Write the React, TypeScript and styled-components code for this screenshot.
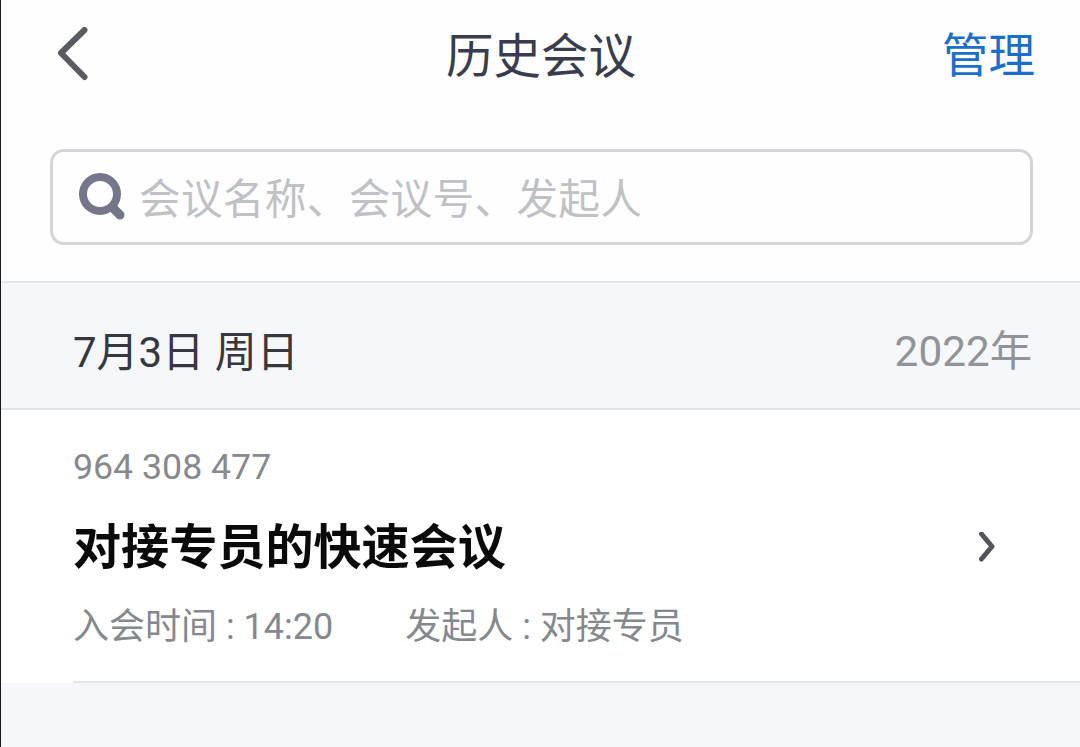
import React from "react";
import styled, { createGlobalStyle } from "styled-components";

const GlobalStyle = createGlobalStyle`
  html, body {
    margin: 0;
    padding: 0;
    height: 100%;
    background: #f5f7fa;
  }
  #root {
    height: 100%;
  }
`;

const Page = styled.div`
  width: 1080px;
  height: 747px;
  box-sizing: border-box;
  overflow: hidden;
  display: flex;
  flex-direction: column;
  background: #f5f7fa;
  border-left: 1px solid #1a1a1a;
  font-family: "Roboto", "Noto Sans CJK SC", sans-serif;
`;

const Top = styled.div`
  background: #fefefe;
  height: 283px;
  flex: none;
  box-sizing: border-box;
  border-bottom: 2px solid #e6e7ea;
`;

const NavBar = styled.header`
  height: 110px;
  display: grid;
  grid-template-columns: 1fr auto 1fr;
  align-items: center;
  padding: 0 45px 0 46px;
`;

const BackButton = styled.div`
  width: 36px;
  height: 56px;
  margin-left: 9px;
  display: flex;
`;

const NavTitle = styled.h1`
  margin: 5px 0 0;
  font-size: 47.5px;
  font-weight: 400;
  color: #393c4d;
  line-height: 1;
`;

const NavAction = styled.span`
  justify-self: end;
  margin-top: 2px;
  font-size: 46.5px;
  color: #1c6fc9;
  line-height: 1;
`;

const SearchBox = styled.div`
  margin: 39px 47px 0 49px;
  height: 96px;
  box-sizing: border-box;
  border: 3px solid #d4d5d8;
  border-radius: 14px;
  display: flex;
  align-items: center;
  padding-left: 26px;
  gap: 12px;
`;

const Placeholder = styled.span`
  margin-top: 5px;
  font-size: 41.7px;
  letter-spacing: 0.25px;
  color: #bfc1c5;
  line-height: 1;
`;

const DateBand = styled.div`
  height: 127px;
  flex: none;
  box-sizing: border-box;
  display: flex;
  align-items: center;
  justify-content: space-between;
  padding: 14px 48px 0 72px;
  border-bottom: 2px solid #e1e3e6;
`;

const DateText = styled.span`
  font-size: 42px;
  color: #35383f;
  line-height: 1;
`;

const YearText = styled.span`
  font-size: 42.3px;
  color: #909398;
  line-height: 1;
`;

const MeetingRow = styled.div`
  height: 273px;
  flex: none;
  box-sizing: border-box;
  background: #ffffff;
  padding: 37px 0 0 72px;
  display: flex;
  flex-direction: column;
`;

const MeetingBody = styled.div`
  flex: 1;
  display: flex;
  flex-direction: column;
  border-bottom: 2px solid #e4e5e8;
`;

const MeetingId = styled.div`
  font-size: 35.7px;
  line-height: 40px;
  color: #86898e;
`;

const TitleRow = styled.div`
  margin-top: 35px;
  display: flex;
  align-items: center;
  justify-content: space-between;
  padding-right: 82px;
`;

const MeetingTitle = styled.div`
  font-size: 48.1px;
  line-height: 52px;
  font-weight: 700;
  color: #0a0a0a;
`;

const MetaRow = styled.div`
  margin-top: 33px;
  display: flex;
  gap: 72px;
  font-size: 36px;
  line-height: 40px;
  color: #85888d;
`;

function App() {
  return (
    <Page>
      <GlobalStyle />
      <Top>
        <NavBar>
          <BackButton>
            <svg width="36" height="56" viewBox="0 0 36 56" fill="none">
              <path
                d="M28.5 3 L5 26 L28.5 50"
                stroke="#5a5b60"
                strokeWidth="6"
                strokeLinecap="round"
                strokeLinejoin="round"
              />
            </svg>
          </BackButton>
          <NavTitle>历史会议</NavTitle>
          <NavAction>管理</NavAction>
        </NavBar>
        <SearchBox>
          <svg width="48" height="48" viewBox="0 0 48 48" fill="none">
            <circle cx="21" cy="21" r="17" stroke="#74778a" strokeWidth="8" />
            <path d="M35 36 L41 42" stroke="#74778a" strokeWidth="9" strokeLinecap="round" />
          </svg>
          <Placeholder>会议名称、会议号、发起人</Placeholder>
        </SearchBox>
      </Top>
      <DateBand>
        <DateText>7月3日 周日</DateText>
        <YearText>2022年</YearText>
      </DateBand>
      <MeetingRow>
        <MeetingBody>
          <MeetingId>964 308 477</MeetingId>
          <TitleRow>
            <MeetingTitle>对接专员的快速会议</MeetingTitle>
            <svg width="20" height="32" viewBox="0 0 20 32" fill="none">
              <path
                d="M3.5 2 L14 14.5 L3.5 27"
                stroke="#53555b"
                strokeWidth="5"
                strokeLinecap="round"
                strokeLinejoin="round"
              />
            </svg>
          </TitleRow>
          <MetaRow>
            <span>入会时间 : 14:20</span>
            <span>发起人 : 对接专员</span>
          </MetaRow>
        </MeetingBody>
      </MeetingRow>
    </Page>
  );
}

export default App;
